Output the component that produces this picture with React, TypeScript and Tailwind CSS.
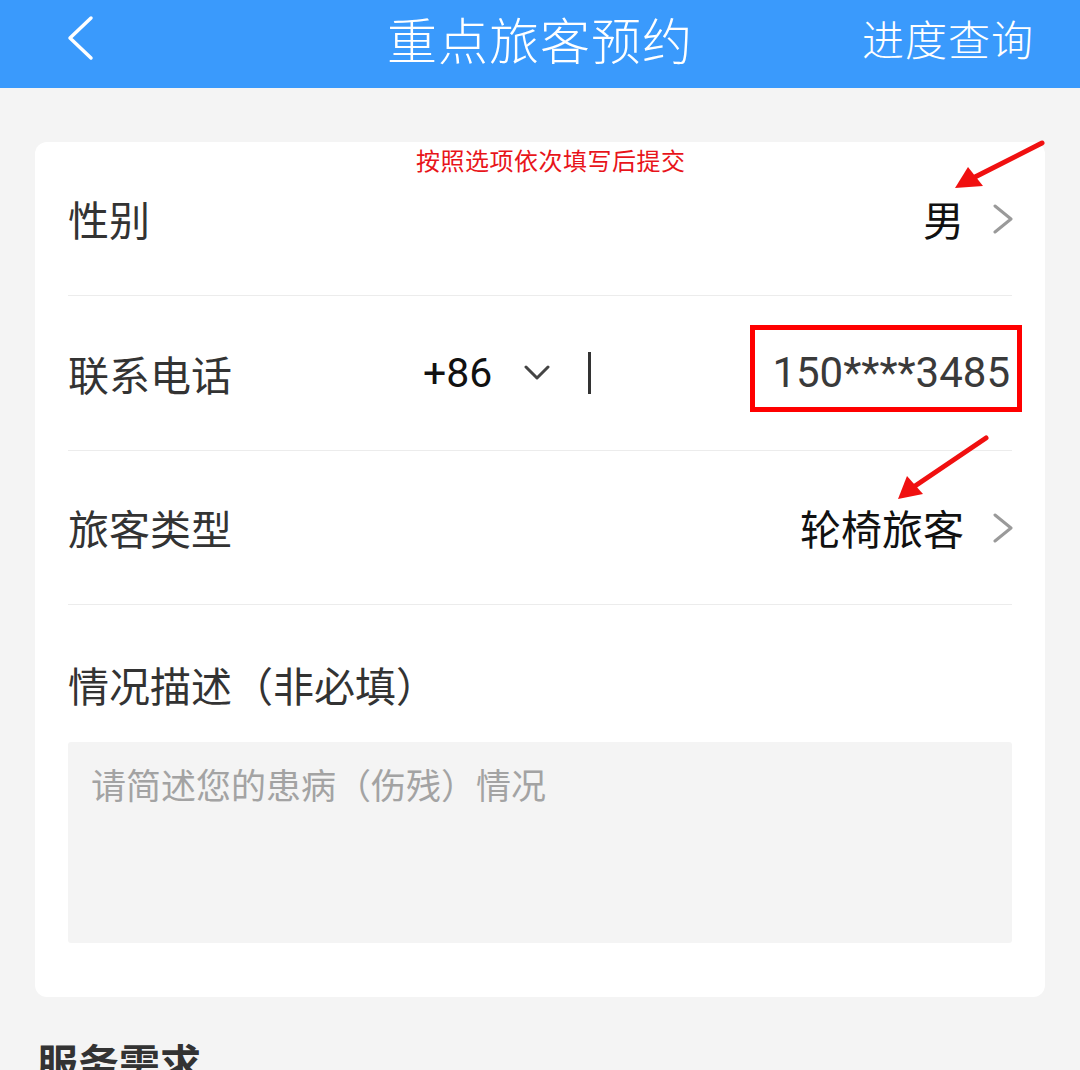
const font = { fontFamily: '"Noto Sans CJK SC", "Noto Sans", sans-serif' };
const numFont = { fontFamily: 'Roboto, "Noto Sans", sans-serif' };

function Arrow() {
  return (
    <svg width="22" height="30" viewBox="0 0 22 30" className="-mr-[2px]">
      <polyline points="3,2 19,15 3,28" fill="none" stroke="#9a9a9a" strokeWidth="3" strokeLinecap="round" strokeLinejoin="round" />
    </svg>
  );
}

function Row({ label, children, last }: { label: string; children?: React.ReactNode; last?: boolean }) {
  return (
    <div className={`h-[154px] flex items-center ${last ? '' : 'border-b border-[#ececec]'}`}>
      <span className="text-[41px] text-[#333] leading-none">{label}</span>
      <div className="flex-1 flex items-center justify-end">{children}</div>
    </div>
  );
}

export default function App() {
  return (
    <div className="relative w-[1080px] h-[1070px] overflow-hidden bg-[#f4f4f4]" style={font}>
      {/* Header */}
      <div className="h-[88px] bg-[#3a9afc] flex items-center px-[66px] pb-[12px] relative">
        <svg width="28" height="46" viewBox="0 0 28 46">
          <polyline points="25,3 4,23 25,43" fill="none" stroke="#fff" strokeWidth="3.5" strokeLinecap="round" strokeLinejoin="round" />
        </svg>
        <div className="absolute left-0 right-0 top-[5px] text-center text-white text-[50px] font-light leading-[66px] tracking-[1px]">
          重点旅客预约
        </div>
        <div className="ml-auto text-white text-[42px] font-light leading-none -mr-[20px] tracking-[1px]">进度查询</div>
      </div>

      {/* Form card */}
      <div className="pt-[54px] px-[35px]">
        <div className="bg-white rounded-[12px] px-[33px] pb-[54px]">
          <Row label="性别">
            <span className="text-[41px] text-[#111] leading-none mr-[28px]">男</span>
            <Arrow />
          </Row>
          <div className="h-[155px] flex items-center border-b border-[#ececec]">
            <span className="text-[41px] text-[#333] leading-none">联系电话</span>
            <span className="ml-[191px] text-[41px] text-[#111] leading-none" style={numFont}>
              +86
            </span>
            <svg width="26" height="16" viewBox="0 0 26 16" className="ml-[32px]">
              <polyline points="2,2 13,13 24,2" fill="none" stroke="#444" strokeWidth="3" strokeLinecap="round" strokeLinejoin="round" />
            </svg>
            <div className="ml-[38px] w-[3px] h-[42px] bg-[#333]" />
            <span className="ml-auto mr-[2px] text-[42px] text-[#3a3a3a] leading-none" style={numFont}>
              150****3485
            </span>
          </div>
          <Row label="旅客类型">
            <span className="text-[41px] text-[#111] leading-none mr-[28px]">轮椅旅客</span>
            <Arrow />
          </Row>
          <div className="h-[137px] flex items-center pt-[22px]">
            <span className="text-[41px] text-[#333] leading-none">情况描述（非必填）</span>
          </div>
          <div className="h-[201px] bg-[#f4f4f4] rounded-[3px] px-[23px] pt-[24px]">
            <span className="text-[35px] text-[#a3a3a3] leading-none">请简述您的患病（伤残）情况</span>
          </div>
        </div>
      </div>

      <div className="px-[37px] pt-[44px] text-[41px] font-bold text-[#333] leading-none">服务需求</div>

      {/* Annotations */}
      <div className="absolute left-[416px] top-[148px] text-[24px] text-[#e8141a] leading-none tracking-[0.5px]">
        按照选项依次填写后提交
      </div>
      <div className="absolute left-[750px] top-[325px] w-[272px] h-[87px] border-[5px] border-[#ff0000]" />
      <svg className="absolute left-0 top-0 pointer-events-none" width="1080" height="1070">
        <line x1="1042" y1="143" x2="975" y2="177" stroke="#f01010" strokeWidth="5" strokeLinecap="round" />
        <polygon points="955,188 968,167 983,186" fill="#f01010" />
        <line x1="986" y1="438" x2="915" y2="486" stroke="#f01010" strokeWidth="5" strokeLinecap="round" />
        <polygon points="898,499 907,476 923,494" fill="#f01010" />
      </svg>
    </div>
  );
}
